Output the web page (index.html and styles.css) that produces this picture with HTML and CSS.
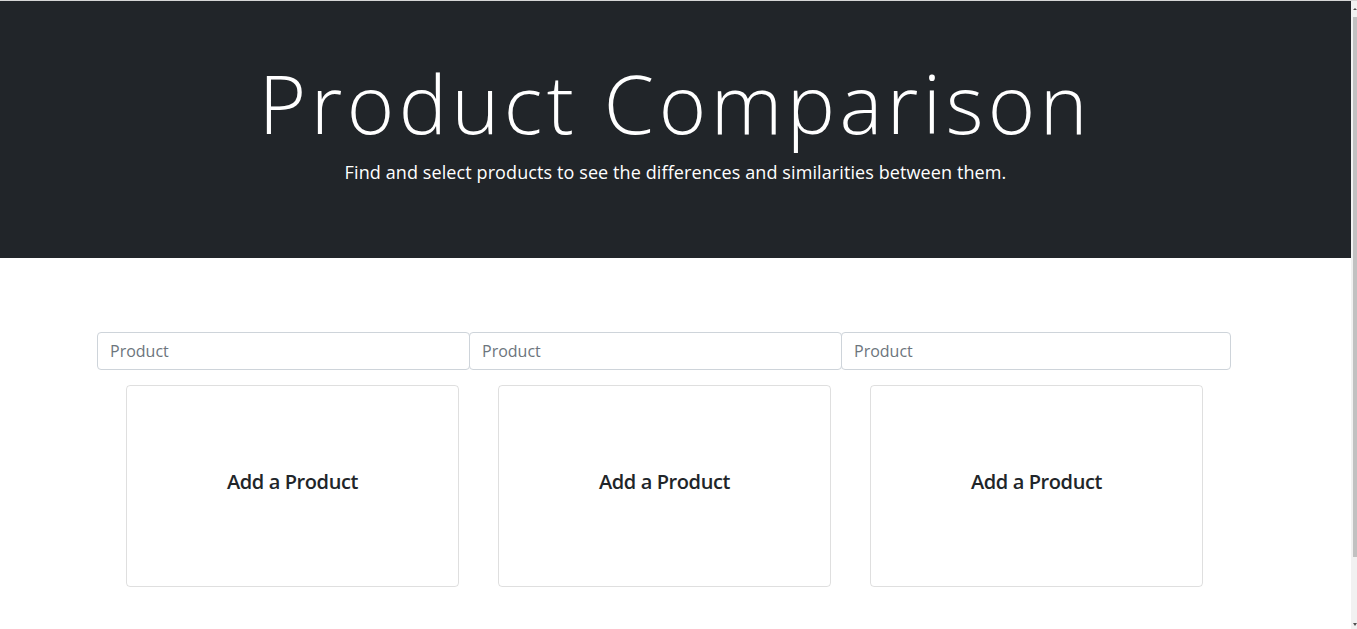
FILE: index.html
```html
<!DOCTYPE html>
<html lang="en">
<head>
<meta charset="utf-8">
<title>Product Comparison</title>
<link rel="stylesheet" href="styles.css">
</head>
<body>
<div class="page">
  <header class="hero">
    <h1 class="hero-title">Product Comparison</h1>
    <p class="hero-lead">Find and select products to see the differences and similarities between them.</p>
  </header>
  <main class="main">
    <div class="search-row">
      <input class="search-input first" type="text" placeholder="Product">
      <input class="search-input second" type="text" placeholder="Product">
      <input class="search-input third" type="text" placeholder="Product">
    </div>
    <div class="card-row">
      <div class="card"><h2 class="card-title">Add a Product</h2></div>
      <div class="card"><h2 class="card-title">Add a Product</h2></div>
      <div class="card"><h2 class="card-title">Add a Product</h2></div>
    </div>
  </main>
</div>
<aside class="scrollbar" aria-hidden="true">
  <span class="scroll-arrow up"></span>
  <span class="scroll-thumb"></span>
  <span class="scroll-arrow down"></span>
</aside>
</body>
</html>
```
FILE: styles.css
```css
body {
  margin: 0;
  height: 628px;
  overflow: hidden;
  display: flex;
  font-family: "Open Sans", "Liberation Sans", sans-serif;
  color: #212529;
  background: #fff;
  border-top: 1px solid #d6d6d6;
}
.page {
  flex: 1;
  min-width: 0;
}
.scrollbar {
  width: 6px;
  background: #f1f1f1;
  display: flex;
  flex-direction: column;
  align-items: flex-end;
}
.scroll-arrow {
  height: 16px;
  width: 4px;
  display: flex;
  justify-content: center;
}
.scroll-arrow.up {
  align-items: flex-start;
}
.scroll-arrow.up::before {
  content: "";
  margin-top: 7px;
  border-left: 2px solid transparent;
  border-right: 2px solid transparent;
  border-bottom: 2px solid #505050;
}
.scroll-arrow.down {
  margin-top: auto;
  align-items: flex-end;
}
.scroll-arrow.down::before {
  content: "";
  margin-bottom: 3px;
  border-left: 2px solid transparent;
  border-right: 2px solid transparent;
  border-top: 3px solid #505050;
}
.scroll-thumb {
  width: 4px;
  height: 540px;
  background: #c1c1c1;
}
.hero {
  background: #212529;
  height: 257px;
  display: flex;
  flex-direction: column;
  align-items: center;
  box-sizing: border-box;
  padding-top: 47px;
  color: #fff;
}
.hero-title {
  margin: 0;
  font-family: "Open Sans", sans-serif;
  font-weight: 300;
  font-size: 81px;
  line-height: 110px;
  letter-spacing: 4.5px;
}
.hero-lead {
  margin: 0;
  font-family: "Open Sans", sans-serif;
  font-weight: 400;
  font-size: 18px;
  line-height: 28px;
  letter-spacing: 0.1px;
}
.main {
  padding-top: 74px;
}
.search-row {
  display: flex;
  margin-left: 97px;
}
.search-input {
  box-sizing: border-box;
  height: 38px;
  border: 1px solid #ced4da;
  border-radius: 4px;
  padding: 0 12px;
  font-family: "Open Sans", sans-serif;
  font-size: 16px;
  color: #495057;
  background: #fff;
  outline: none;
}
.search-input::placeholder {
  color: #6c757d;
}
.first { width: 373px; }
.second { width: 373px; margin-left: -1px; }
.third { width: 390px; margin-left: -1px; }
.card-row {
  display: flex;
  gap: 39px;
  margin-left: 126px;
  margin-top: 15px;
}
.card {
  box-sizing: border-box;
  width: 333px;
  height: 202px;
  padding-bottom: 10px;
  border: 1px solid rgba(0, 0, 0, 0.125);
  border-radius: 4px;
  display: flex;
  align-items: center;
  justify-content: center;
}
.card-title {
  margin: 0;
  font-size: 20px;
  font-weight: 600;
  color: #212529;
  letter-spacing: -0.4px;
}
```
